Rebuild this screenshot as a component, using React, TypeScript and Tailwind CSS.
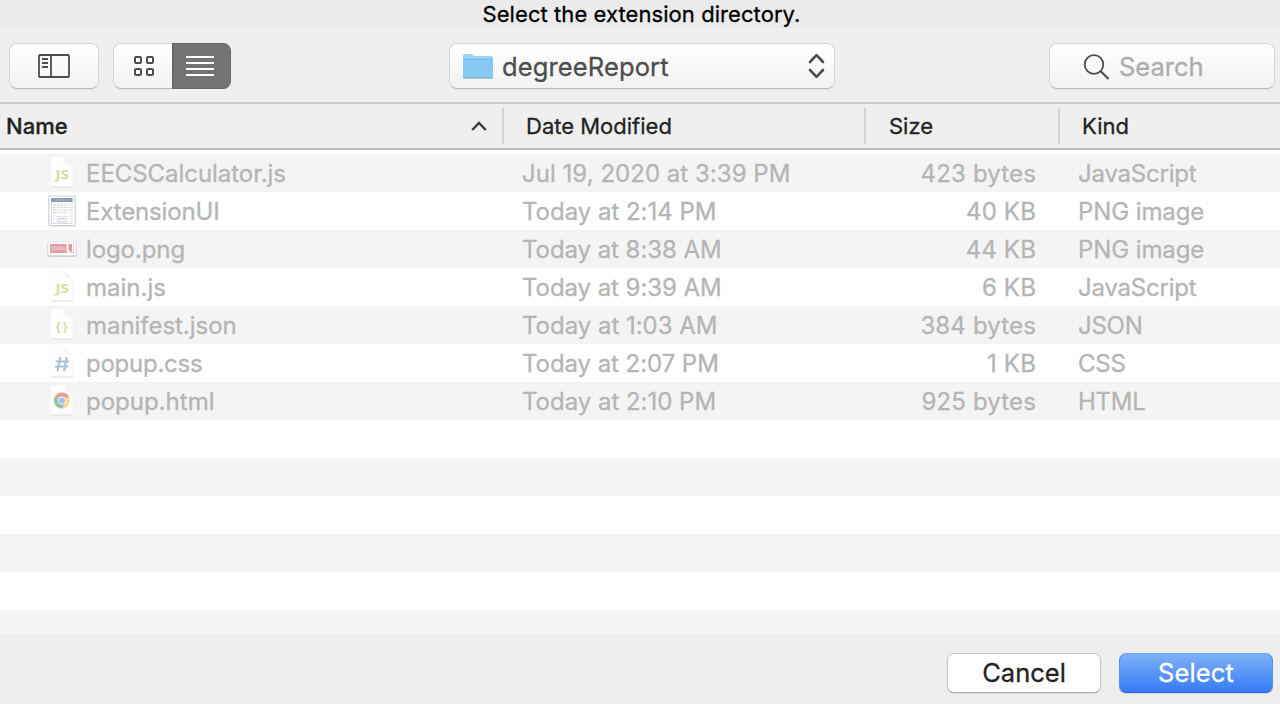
import React from "react";

type Kind = "js" | "doc" | "logo" | "json" | "css" | "chrome";
type FileRow = { icon: Kind; name: string; date: string; size: string; kind: string; nameTracking: string; dateTracking: string; kindTracking: string };

const files: FileRow[] = [
  { icon: "js", name: "EECSCalculator.js", date: "Jul 19, 2020 at 3:39 PM", size: "423 bytes", kind: "JavaScript", nameTracking: "tracking-[-0.05px]", dateTracking: "tracking-[0.03px]", kindTracking: "tracking-[-0.22px]" },
  { icon: "doc", name: "ExtensionUI", date: "Today at 2:14 PM", size: "40 KB", kind: "PNG image", nameTracking: "tracking-[-0.15px]", dateTracking: "tracking-[-0.02px]", kindTracking: "tracking-[-0.1px]" },
  { icon: "logo", name: "logo.png", date: "Today at 8:38 AM", size: "44 KB", kind: "PNG image", nameTracking: "tracking-[-0.1px]", dateTracking: "tracking-[-0.06px]", kindTracking: "tracking-[-0.1px]" },
  { icon: "js", name: "main.js", date: "Today at 9:39 AM", size: "6 KB", kind: "JavaScript", nameTracking: "tracking-[0px]", dateTracking: "tracking-[-0.06px]", kindTracking: "tracking-[-0.22px]" },
  { icon: "json", name: "manifest.json", date: "Today at 1:03 AM", size: "384 bytes", kind: "JSON", nameTracking: "tracking-[-0.04px]", dateTracking: "tracking-[-0.02px]", kindTracking: "tracking-[-0.25px]" },
  { icon: "css", name: "popup.css", date: "Today at 2:07 PM", size: "1 KB", kind: "CSS", nameTracking: "tracking-[-0.25px]", dateTracking: "tracking-[-0.06px]", kindTracking: "tracking-[-0.25px]" },
  { icon: "chrome", name: "popup.html", date: "Today at 2:10 PM", size: "925 bytes", kind: "HTML", nameTracking: "tracking-[0px]", dateTracking: "tracking-[-0.02px]", kindTracking: "tracking-[-0.25px]" },
];

function Page({ children }: { children: React.ReactNode }) {
  return (
    <svg width="32" height="38" viewBox="0 0 32 38">
      <path d="M5 33h22" stroke="#dedede" strokeWidth="1.4" />
      <path d="M4.800 3.200h13.200l8.700 8.700v20.400h-21.900z" fill="#fefefe" stroke="#f6f6f6" strokeWidth=".5" />
      <path d="M17.500 3.200c1.500 1.500.8 4.500 2 6s5.200.8 7.200 2.700z" fill="#f3f3f3" />
      {children}
    </svg>
  );
}

function FileIcon({ kind }: { kind: Kind }) {
  if (kind === "doc")
    return (
      <svg width="32" height="38" viewBox="0 0 32 38">
        <rect x="2.500" y="4.500" width="27" height="30" rx="1" fill="#dadada" />
        <rect x="3" y="4" width="26" height="29.500" fill="#fff" stroke="#c9c9c9" strokeWidth=".8" />
        <rect x="5.500" y="6.500" width="20.500" height="25" fill="#fafafb" stroke="#dcdde2" />
        <rect x="5" y="6" width="21.500" height="4" fill="#8d9aba" />
        <path d="M10 8h11" stroke="#b3bcd0" strokeDasharray="2 1" />
        <path d="M7 13h17M7 15.500h18M7 18h17M7 20.500h13" stroke="#dbdbdf" strokeDasharray="3 .7" />
        <path d="M10 24.500h12" stroke="#e0e0e5" />
        <rect x="11.500" y="26.500" width="9" height="3.500" rx="1.200" fill="#f3f3fb" stroke="#cdcde2" />
      </svg>
    );
  if (kind === "logo")
    return (
      <svg width="32" height="38" viewBox="0 0 32 38">
        <rect x="1.500" y="13" width="29" height="14" rx="1" fill="#d0d0d0" />
        <rect x="2" y="12" width="28" height="13.500" fill="#fff" stroke="#d2d2d2" strokeWidth=".6" />
        <rect x="4" y="14" width="24" height="9" fill="#e39a9f" />
        <text x="4.500" y="19.500" fontSize="6" textLength="15" fontFamily="Liberation Serif, serif" fill="#f8dfe1">YORK</text>
        <path d="M5 21h14" stroke="#eab2b6" strokeDasharray="1 .5" />
        <path d="M20.500 14h2v6q0 1.500 2 1.500v1.500h-2q-2 0-2-2zM26 14h1.500v7q0 2-2 2v-1.500q.5 0 .5-1.500z" fill="#fff" />
      </svg>
    );
  if (kind === "js")
    return (
      <Page>
        <text x="9.400" y="25" fontSize="13" fontWeight="700" textLength="13.500" lengthAdjust="spacingAndGlyphs" fontFamily="Open Sans, sans-serif" fill="#dbdca0">JS</text>
      </Page>
    );
  if (kind === "json")
    return (
      <Page>
        <text x="9.800" y="24.500" fontSize="12" fontWeight="700" textLength="12" fontFamily="Open Sans, sans-serif" fill="#dbdca0">{"{}"}</text>
      </Page>
    );
  if (kind === "css")
    return (
      <Page>
        <path d="M14.300 13l-2.800 14M20.800 13l-2.800 14M9.700 17.500h13.300M9 22.500h13.300" stroke="#aac3d4" strokeWidth="2.200" />
      </Page>
    );
  return (
    <Page>
      <circle cx="16" cy="18.500" r="8" fill="#f9dd96" />
      <path d="M16 18.500L9.070 14.500a8 8 0 0 0 6.930 12l3-6z" fill="#92c5a2" />
      <path d="M16 18.500L9.070 14.500a8 8 0 0 1 13.860 0z" fill="#e89c98" />
      <circle cx="16" cy="18.500" r="3.900" fill="#f5f5f5" />
      <circle cx="16" cy="18.500" r="3" fill="#a4bff5" />
    </Page>
  );
}

const control = "border border-[#d6d6d6] border-b-[#bbbbbb] bg-linear-to-b from-white to-[#f2f2f2] shadow-[0_1px_0_rgba(0,0,0,0.05)]";

export default function App() {
  return (
    <div className="flex h-[704px] w-[1280px] flex-col overflow-hidden bg-[#efefef] font-['Inter','Liberation_Sans',sans-serif] whitespace-nowrap [-webkit-text-stroke:0.3px]">
      <div className="flex h-7 justify-center bg-[#ebebeb] pl-[3px] text-[22px] leading-7 tracking-[0.07px] text-black">
        <span>Select the extension directory.</span>
      </div>

      <div className="flex h-[76px] items-start border-b-2 border-[#c9c9c9] pt-[15px] pr-[5px] pl-[9px]">
        <button className={`flex h-[46px] w-[90px] items-center justify-center rounded-[8px] ${control}`}>
          <svg width="32" height="24" viewBox="0 0 32 24" fill="none" stroke="#4d4d4d" strokeWidth="1.800">
            <rect x="1" y="1" width="30" height="22" rx="1" />
            <path d="M13 1v22M4 5h6M4 9h6M4 13h6" />
          </svg>
        </button>
        <div className="ml-[14px] flex">
          <button className={`flex h-[46px] w-[59px] items-center justify-center rounded-l-[8px] border-r-0 pl-[2px] ${control}`}>
            <svg width="20" height="20" viewBox="0 0 20 20" fill="none" stroke="#4d4d4d" strokeWidth="2">
              <rect x="1" y="1" width="6" height="6" rx="1" />
              <rect x="13" y="1" width="6" height="6" rx="1" />
              <rect x="1" y="13" width="6" height="6" rx="1" />
              <rect x="13" y="13" width="6" height="6" rx="1" />
            </svg>
          </button>
          <button className="flex h-[46px] w-[59px] items-center justify-center rounded-r-[8px] border border-l-2 border-[#686868] bg-[#747474] pr-[4px]">
            <svg width="28" height="20" viewBox="0 0 28 20" stroke="#fff" strokeWidth="2">
              <path d="M0 1h28M0 7h28M0 13h28M0 19h28" />
            </svg>
          </button>
        </div>
        <button className={`ml-[218px] flex h-[46px] w-[386px] items-center rounded-[8px] pr-[9px] pl-[12px] ${control}`}>
          <svg width="32" height="28" viewBox="0 0 32 28">
            <path d="M1 26.500h30" stroke="#b8c4cc" strokeWidth="1" />
            <path d="M1 4q0-2 2-2h6q1 0 2 1t2 1h16.500q1.500 0 1.500 1.500v19.500q0 1-1 1h-28q-1 0-1-1z" fill="#9ad3f5" />
            <path d="M1 7h30v18q0 1-1 1h-28q-1 0-1-1z" fill="#85c9f3" />
            <path d="M1 7.200h30M1.500 25.500h29" stroke="#72b7e2" strokeWidth=".8" />
          </svg>
          <span className="ml-[8px] pt-[2px] text-[25.500px] tracking-[0.12px] text-[#4d4d4d]">degreeReport</span>
          <svg className="ml-auto" width="17" height="26" viewBox="0 0 17 26" fill="none" stroke="#4d4d4d" strokeWidth="2.600" strokeLinecap="round" strokeLinejoin="round">
            <path d="M2 9L8.500 2.200L15 9M2 17L8.500 23.800L15 17" />
          </svg>
        </button>
        <div className={`ml-auto flex h-[46px] w-[226px] items-center rounded-[8px] pl-[33px] ${control}`}>
          <svg width="28" height="28" viewBox="0 0 28 28" fill="none" stroke="#4d4d4d" strokeWidth="1.800">
            <circle cx="11" cy="12.500" r="9.300" />
            <path d="M17.500 19l8 8" strokeWidth="2.200" />
          </svg>
          <span className="ml-[8px] pt-[2px] text-[25.500px] text-[#adadad]">Search</span>
        </div>
      </div>

      <div className="flex h-[46px] items-center border-b-2 border-[#bcbcbc] text-[22px] text-[#232323]">
        <div className="flex w-[502px] items-center justify-between pr-[15px] pl-[6px]">
          <span className="font-medium">Name</span>
          <svg width="16" height="10" viewBox="0 0 16 10" fill="none" stroke="#3c3c3c" strokeWidth="2.500">
            <path d="M1.200 9L8 2l6.800 7" />
          </svg>
        </div>
        <div className="flex h-9 w-[362px] items-center border-l-2 border-[#d4d4d4] pl-[22px]"><span>Date Modified</span></div>
        <div className="flex h-9 w-[194px] items-center border-l-2 border-[#d4d4d4] pl-[23px]"><span>Size</span></div>
        <div className="flex h-9 items-center border-l-2 border-[#d4d4d4] pl-[22px]"><span>Kind</span></div>
      </div>

      <div className="h-[484px] shrink-0 overflow-hidden bg-white pt-1 text-[24px] text-[#b5b5b5]">
        {files.map((f) => (
          <div key={f.name} className="flex h-[38px] items-center odd:bg-[#f4f4f4]">
            <div className="flex w-[522px] items-center pl-[46px]">
              <FileIcon kind={f.icon} />
              <span className={`ml-[8px] pt-[2px] ${f.nameTracking}`}>{f.name}</span>
            </div>
            <span className={`w-[342px] pt-[2px] ${f.dateTracking}`}>{f.date}</span>
            <span className="w-[172px] pt-[2px] text-right tracking-[0.15px]">{f.size}</span>
            <span className={`ml-[42px] pt-[2px] ${f.kindTracking}`}>{f.kind}</span>
          </div>
        ))}
        {[0, 1, 2, 3, 4, 5].map((i) => (
          <div key={i} className="h-[38px] even:bg-white odd:bg-[#f4f4f4]" />
        ))}
      </div>

      <div className="flex flex-1 items-start justify-end gap-[18px] bg-[#eeeeee] pt-[19px] pr-[7px] text-[25.500px]">
        <button className="flex h-[40px] w-[154px] items-center justify-center rounded-[7px] border border-[#c6c6c6] border-b-[#adadad] bg-white text-[#232323] shadow-[0_1px_1px_rgba(0,0,0,0.1)]"><span>Cancel</span></button>
        <button className="flex h-[40px] w-[154px] items-center justify-center rounded-[7px] border border-[#4f8fef] border-t-[#6aa2ee] border-b-[#245ff5] bg-linear-to-b from-[#7db0f6] to-[#367af7] text-white shadow-[0_1px_1px_rgba(0,0,0,0.1)]"><span className="tracking-[0.15px]">Select</span></button>
      </div>
    </div>
  );
}
